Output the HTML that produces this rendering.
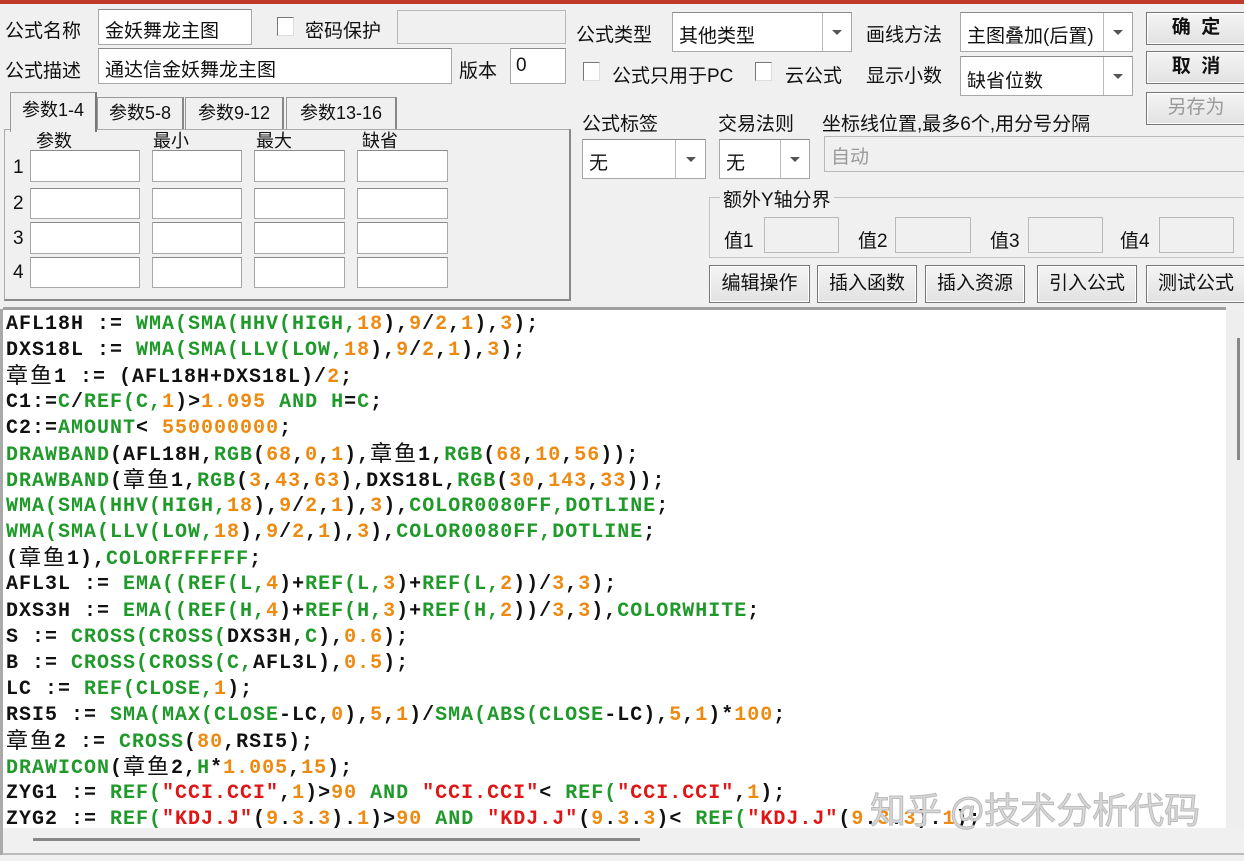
<!DOCTYPE html>
<html><head><meta charset="utf-8"><style>
*{box-sizing:border-box;margin:0;padding:0}
body{width:1244px;height:861px;background:#f0f0f0;position:relative;overflow:hidden;font-family:"Liberation Sans","Noto Sans CJK SC",sans-serif;font-size:19px;color:#111}
.a{position:absolute;white-space:nowrap}
.in{position:absolute;background:#fff;border:1px solid #a8a8a8;border-top-color:#8a8a8a}
.dis{position:absolute;background:#f0f0f0;border:1px solid #b8b8b8}
.cb{position:absolute;width:17px;height:19px;background:#fff;border:1px solid #777;border-right-color:#ddd;border-bottom-color:#ddd}
.btn{position:absolute;background:linear-gradient(#f4f4f4,#e2e2e2);border:1px solid #777;box-shadow:inset 0 0 0 1px #fff;text-align:center;font-size:19px}
.combo .arr{position:absolute;right:0;top:0;bottom:0;border-left:1px solid #bbb}
.combo .arr:after{content:"";position:absolute;left:50%;top:50%;margin:-2px 0 0 -5px;border:5px solid transparent;border-top:5px solid #555;border-bottom:0}
.tab{position:absolute;border:1px solid #999;border-bottom:none;background:#f0f0f0;text-align:center;font-size:18px}
#code{position:absolute;left:3px;top:307px;width:1223px;height:521px;background:#fff;border-top:3px solid #a0a0a0;overflow:hidden}
#code .p{font-family:"Liberation Mono","Noto Sans CJK SC",monospace;font-weight:bold;font-size:20px;letter-spacing:1px;color:#111;padding:2px 0 0 3px;white-space:pre}
.l{height:26.05px;line-height:26px;overflow:visible}
.g{color:#1f9a2a}.o{color:#ee8a10}.r{color:#e01515}
.cj{font-family:"Noto Sans CJK SC",sans-serif;font-weight:normal;font-size:22px;letter-spacing:2px;line-height:20px;display:inline-block;height:20px;vertical-align:-1px}
</style></head><body>
<div class="a" style="left:0;top:0;width:1244px;height:4px;background:#c0392b"></div>

<div class="a" style="left:5px;top:16px">公式名称</div>
<div class="in" style="left:98px;top:9px;width:154px;height:36px"></div>
<div class="a" style="left:105px;top:16px">金妖舞龙主图</div>
<div class="cb" style="left:277px;top:17px"></div>
<div class="a" style="left:305px;top:16px">密码保护</div>
<div class="dis" style="left:397px;top:10px;width:169px;height:34px"></div>

<div class="a" style="left:5px;top:56px">公式描述</div>
<div class="in" style="left:98px;top:48px;width:354px;height:36px"></div>
<div class="a" style="left:105px;top:55px">通达信金妖舞龙主图</div>
<div class="a" style="left:459px;top:56px">版本</div>
<div class="in" style="left:510px;top:48px;width:56px;height:36px"></div>
<div class="a" style="left:516px;top:55px">0</div>

<div class="a" style="left:4px;top:129px;width:567px;height:172px;border:1px solid #aaa;border-right:2px solid #888;border-bottom:2px solid #888"></div>
<div class="tab" style="left:10px;top:92px;width:87px;height:40px;line-height:34px;border-right:2px solid #777;z-index:2">参数1-4</div>
<div class="tab" style="left:97px;top:97px;width:87px;height:32px;line-height:30px;border-right:2px solid #888">参数5-8</div>
<div class="tab" style="left:185px;top:97px;width:99px;height:32px;line-height:30px;border-right:2px solid #888">参数9-12</div>
<div class="tab" style="left:286px;top:97px;width:111px;height:32px;line-height:30px;border-right:2px solid #888">参数13-16</div>
<div class="a" style="left:36px;top:127px;font-size:18px">参数</div>
<div class="a" style="left:153px;top:127px;font-size:18px">最小</div>
<div class="a" style="left:256px;top:127px;font-size:18px">最大</div>
<div class="a" style="left:362px;top:127px;font-size:18px">缺省</div>
<div class="a" style="left:13px;top:157px">1</div>
<div class="a" style="left:13px;top:193px">2</div>
<div class="a" style="left:13px;top:228px">3</div>
<div class="a" style="left:13px;top:262px">4</div>
<div class="in" style="left:30px;top:150px;width:110px;height:32px"></div><div class="in" style="left:152px;top:150px;width:90px;height:32px"></div><div class="in" style="left:254px;top:150px;width:91px;height:32px"></div><div class="in" style="left:357px;top:150px;width:91px;height:32px"></div>
<div class="in" style="left:30px;top:188px;width:110px;height:31px"></div><div class="in" style="left:152px;top:188px;width:90px;height:31px"></div><div class="in" style="left:254px;top:188px;width:91px;height:31px"></div><div class="in" style="left:357px;top:188px;width:91px;height:31px"></div>
<div class="in" style="left:30px;top:222px;width:110px;height:32px"></div><div class="in" style="left:152px;top:222px;width:90px;height:32px"></div><div class="in" style="left:254px;top:222px;width:91px;height:32px"></div><div class="in" style="left:357px;top:222px;width:91px;height:32px"></div>
<div class="in" style="left:30px;top:257px;width:110px;height:31px"></div><div class="in" style="left:152px;top:257px;width:90px;height:31px"></div><div class="in" style="left:254px;top:257px;width:91px;height:31px"></div><div class="in" style="left:357px;top:257px;width:91px;height:31px"></div>

<div class="a" style="left:576px;top:20px">公式类型</div>
<div class="in combo" style="left:672px;top:12px;width:180px;height:40px"><span class="a" style="left:6px;top:8px">其他类型</span><div class="arr" style="width:29px"></div></div>
<div class="a" style="left:866px;top:20px">画线方法</div>
<div class="in combo" style="left:960px;top:12px;width:173px;height:40px"><span class="a" style="left:6px;top:8px">主图叠加(后置)</span><div class="arr" style="width:29px"></div></div>
<div class="btn" style="left:1146px;top:12px;width:100px;height:33px;line-height:30px;font-weight:bold">确&nbsp;&nbsp;定</div>
<div class="btn" style="left:1146px;top:51px;width:100px;height:33px;line-height:30px;font-weight:bold">取&nbsp;&nbsp;消</div>
<div class="btn" style="left:1146px;top:92px;width:100px;height:33px;line-height:30px;color:#999">另存为</div>

<div class="cb" style="left:583px;top:62px"></div>
<div class="a" style="left:612px;top:61px">公式只用于PC</div>
<div class="cb" style="left:755px;top:62px"></div>
<div class="a" style="left:785px;top:61px">云公式</div>
<div class="a" style="left:866px;top:61px">显示小数</div>
<div class="in combo" style="left:960px;top:56px;width:173px;height:40px"><span class="a" style="left:6px;top:9px">缺省位数</span><div class="arr" style="width:29px"></div></div>

<div class="a" style="left:582px;top:109px">公式标签</div>
<div class="a" style="left:718px;top:109px">交易法则</div>
<div class="a" style="left:822px;top:109px">坐标线位置,最多6个,用分号分隔</div>
<div class="in combo" style="left:582px;top:139px;width:124px;height:40px"><span class="a" style="left:6px;top:8px">无</span><div class="arr" style="width:30px"></div></div>
<div class="in combo" style="left:719px;top:139px;width:91px;height:40px"><span class="a" style="left:6px;top:8px">无</span><div class="arr" style="width:29px"></div></div>
<div class="dis" style="left:824px;top:136px;width:430px;height:36px"><span class="a" style="left:6px;top:5px;color:#9a9a9a">自动</span></div>

<div class="a" style="left:709px;top:197px;width:540px;height:61px;border:1px solid #c4c4c4"></div>
<div class="a" style="left:720px;top:185px;background:#f0f0f0;padding:0 3px">额外Y轴分界</div>
<div class="a" style="left:724px;top:226px">值1</div><div class="dis" style="left:764px;top:217px;width:75px;height:36px"></div>
<div class="a" style="left:858px;top:226px">值2</div><div class="dis" style="left:895px;top:217px;width:76px;height:36px"></div>
<div class="a" style="left:990px;top:226px">值3</div><div class="dis" style="left:1028px;top:217px;width:75px;height:36px"></div>
<div class="a" style="left:1120px;top:226px">值4</div><div class="dis" style="left:1159px;top:217px;width:75px;height:36px"></div>

<div class="btn" style="left:709px;top:265px;width:101px;height:38px;line-height:36px">编辑操作</div>
<div class="btn" style="left:817px;top:265px;width:100px;height:38px;line-height:36px">插入函数</div>
<div class="btn" style="left:925px;top:265px;width:100px;height:38px;line-height:36px">插入资源</div>
<div class="btn" style="left:1037px;top:265px;width:100px;height:38px;line-height:36px">引入公式</div>
<div class="btn" style="left:1146px;top:265px;width:100px;height:38px;line-height:36px">测试公式</div>

<div id="code"><div class="p"><div class="l">AFL18H := <span class="g">WMA(SMA(HHV(HIGH,</span><span class="o">18</span>),<span class="o">9</span>/<span class="o">2</span>,<span class="o">1</span>),<span class="o">3</span>);</div
><div class="l">DXS18L := <span class="g">WMA(SMA(LLV(LOW,</span><span class="o">18</span>),<span class="o">9</span>/<span class="o">2</span>,<span class="o">1</span>),<span class="o">3</span>);</div
><div class="l"><span class="cj">章鱼</span>1 := (AFL18H+DXS18L)/<span class="o">2</span>;</div
><div class="l">C1:=<span class="g">C</span>/<span class="g">REF(C,</span><span class="o">1</span>)&gt;<span class="o">1.095</span> <span class="g">AND H</span>=<span class="g">C</span>;</div
><div class="l">C2:=<span class="g">AMOUNT</span>&lt; <span class="o">550000000</span>;</div
><div class="l"><span class="g">DRAWBAND</span>(AFL18H,<span class="g">RGB</span>(<span class="o">68</span>,<span class="o">0</span>,<span class="o">1</span>),<span class="cj">章鱼</span>1,<span class="g">RGB</span>(<span class="o">68</span>,<span class="o">10</span>,<span class="o">56</span>));</div
><div class="l"><span class="g">DRAWBAND</span>(<span class="cj">章鱼</span>1,<span class="g">RGB</span>(<span class="o">3</span>,<span class="o">43</span>,<span class="o">63</span>),DXS18L,<span class="g">RGB</span>(<span class="o">30</span>,<span class="o">143</span>,<span class="o">33</span>));</div
><div class="l"><span class="g">WMA(SMA(HHV(HIGH,</span><span class="o">18</span>),<span class="o">9</span>/<span class="o">2</span>,<span class="o">1</span>),<span class="o">3</span>),<span class="g">COLOR0080FF,DOTLINE</span>;</div
><div class="l"><span class="g">WMA(SMA(LLV(LOW,</span><span class="o">18</span>),<span class="o">9</span>/<span class="o">2</span>,<span class="o">1</span>),<span class="o">3</span>),<span class="g">COLOR0080FF,DOTLINE</span>;</div
><div class="l">(<span class="cj">章鱼</span>1),<span class="g">COLORFFFFFF</span>;</div
><div class="l">AFL3L := <span class="g">EMA((REF(L,</span><span class="o">4</span>)+<span class="g">REF(L,</span><span class="o">3</span>)+<span class="g">REF(L,</span><span class="o">2</span>))/<span class="o">3</span>,<span class="o">3</span>);</div
><div class="l">DXS3H := <span class="g">EMA((REF(H,</span><span class="o">4</span>)+<span class="g">REF(H,</span><span class="o">3</span>)+<span class="g">REF(H,</span><span class="o">2</span>))/<span class="o">3</span>,<span class="o">3</span>),<span class="g">COLORWHITE</span>;</div
><div class="l">S := <span class="g">CROSS(CROSS(</span>DXS3H,<span class="g">C</span>),<span class="o">0.6</span>);</div
><div class="l">B := <span class="g">CROSS(CROSS(C,</span>AFL3L),<span class="o">0.5</span>);</div
><div class="l">LC := <span class="g">REF(CLOSE,</span><span class="o">1</span>);</div
><div class="l">RSI5 := <span class="g">SMA(MAX(CLOSE</span>-LC,<span class="o">0</span>),<span class="o">5</span>,<span class="o">1</span>)/<span class="g">SMA(ABS(CLOSE</span>-LC),<span class="o">5</span>,<span class="o">1</span>)*<span class="o">100</span>;</div
><div class="l"><span class="cj">章鱼</span>2 := <span class="g">CROSS</span>(<span class="o">80</span>,RSI5);</div
><div class="l"><span class="g">DRAWICON</span>(<span class="cj">章鱼</span>2,<span class="g">H</span>*<span class="o">1.005</span>,<span class="o">15</span>);</div
><div class="l">ZYG1 := <span class="g">REF(</span><span class="r">"CCI.CCI"</span>,<span class="o">1</span>)&gt;<span class="o">90</span> <span class="g">AND</span> <span class="r">"CCI.CCI"</span>&lt; <span class="g">REF(</span><span class="r">"CCI.CCI"</span>,<span class="o">1</span>);</div
><div class="l">ZYG2 := <span class="g">REF(</span><span class="r">"KDJ.J"</span>(<span class="o">9</span>.<span class="o">3</span>.<span class="o">3</span>).<span class="o">1</span>)&gt;<span class="o">90</span> <span class="g">AND</span> <span class="r">"KDJ.J"</span>(<span class="o">9</span>.<span class="o">3</span>.<span class="o">3</span>)&lt; <span class="g">REF(</span><span class="r">"KDJ.J"</span>(<span class="o">9</span>.<span class="o">3</span>.<span class="o">3</span>).<span class="o">1</span>);</div
></div></div>
<div class="a" style="left:1226px;top:310px;width:18px;height:518px;background:#eee"></div>
<div class="a" style="left:1237px;top:338px;width:3px;height:122px;background:#888"></div>
<div class="a" style="left:3px;top:828px;width:1241px;height:26px;background:#f0f0f0"></div>
<div class="a" style="left:33px;top:838px;width:607px;height:3px;background:#888"></div>
<div class="a" style="left:0;top:853px;width:1244px;height:2px;background:#bbb"></div>
<div class="a" style="left:0;top:309px;width:3px;height:546px;background:#aaa"></div>
<div class="a" style="left:870px;top:782px;font-size:36px;color:#d8d8d8;-webkit-text-stroke:1px #bbb;font-family:'Noto Sans CJK SC',sans-serif">知乎 @技术分析代码</div>
</body></html>
